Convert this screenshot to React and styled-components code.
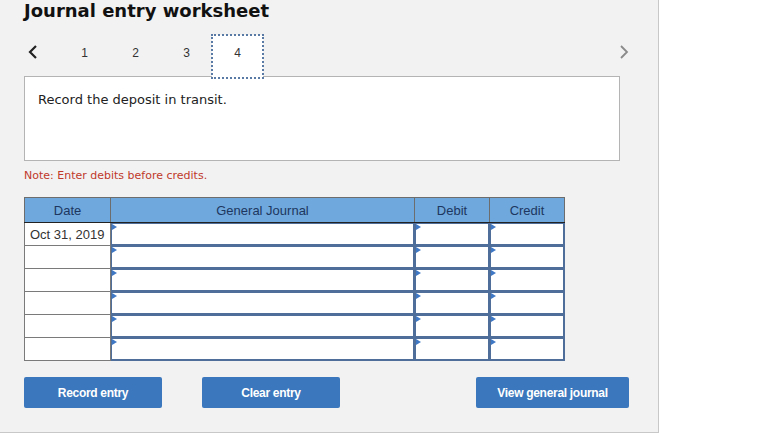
import React from 'react'
import styled, { createGlobalStyle } from 'styled-components'

const GlobalStyle = createGlobalStyle`
    html, body{
        margin: 0;
        padding: 0;
        background: #ffffff;
    }
    *{
        box-sizing: border-box;
    }
`

const Panel = styled.div`
    width: 659px;
    height: 433px;
    background-color: #f2f2f2;
    border-right: 1px solid #c8c8c8;
    border-bottom: 1px solid #c8c8c8;
    padding: 0 0 0 24px;
    font-family: "DejaVu Sans", Verdana, sans-serif;
`

const Title = styled.h1`
    margin: 0;
    padding-top: 0;
    font-size: 18px;
    line-height: 21px;
    font-weight: 700;
    color: #111;
`

const TabRow = styled.div`
    display: flex;
    align-items: stretch;
    height: 43px;
    margin-top: 14px;
    margin-bottom: -2px;
    width: 605px;
    position: relative;
    z-index: 1;
`

const Chevron = styled.button`
    display: flex;
    align-items: center;
    justify-content: ${p => (p.$next ? 'flex-end' : 'flex-start')};
    width: 35px;
    padding: 0 0 9px 3px;
    margin-left: ${p => (p.$next ? 'auto' : '0')};
    border: none;
    background: transparent;
    svg{
        display: block;
    }
`

const Tab = styled.div`
    width: 51px;
    display: flex;
    align-items: center;
    justify-content: center;
    padding-bottom: 7px;
    font-family: "Liberation Sans", Arial, sans-serif;
    font-size: 12px;
    color: #333;
    background-color: ${p => (p.$active ? '#ffffff' : 'transparent')};
    outline: ${p => (p.$active ? '2px dotted #5a7aa6' : 'none')};
    outline-offset: -1px;
`

const Prompt = styled.div`
    width: 596px;
    height: 85px;
    background-color: #ffffff;
    border: 1px solid #b4b4b4;
    padding: 15px 13px;
    font-size: 13px;
    line-height: 16px;
    color: #222;
`

const Note = styled.p`
    margin: 8px 0 0;
    font-size: 11px;
    line-height: 14px;
    color: #c0392b;
`

const Table = styled.table`
    margin-top: 14px;
    border-collapse: collapse;
    width: 540px;
    table-layout: fixed;
    font-family: "Liberation Sans", Arial, sans-serif;
    font-size: 13px;
    th{
        height: 25px;
        background-color: #6fa8dc;
        color: #1d3760;
        font-weight: 400;
        border: 1px solid #6d6d6d;
        border-left-color: #222;
        border-bottom: 1px solid #222;
        padding: 0;
    }
    th:first-child{
        border-left-color: #6d6d6d;
    }
`

const DateCell = styled.td`
    height: 23px;
    padding: 0 0 0 5px;
    background-color: #ffffff;
    border: 1px solid #7a7a7a;
    color: #333;
    white-space: nowrap;
`

const InputCell = styled.td`
    height: 23px;
    padding: 0;
    border: 1px solid #4f6e99;
    position: relative;
    &::before{
        content: '';
        position: absolute;
        top: 1px;
        left: 1px;
        border-top: 3.5px solid transparent;
        border-bottom: 3.5px solid transparent;
        border-left: 5px solid #3f78c4;
    }
`

const Field = styled.div`
    height: 22px;
    background-color: #ffffff;
    border: 1px solid #4f6e99;
`

const ButtonRow = styled.div`
    display: flex;
    margin-top: 16px;
    padding-right: 29px;
`

const Button = styled.button`
    height: 31px;
    width: ${p => p.$w}px;
    margin-left: ${p => p.$ml || '0'};
    background-color: #3b77bc;
    color: #ffffff;
    border: none;
    border-radius: 2px;
    font-family: "Liberation Sans", Arial, sans-serif;
    font-weight: 700;
    font-size: 12px;
    letter-spacing: -0.3px;
`

const rows = ['Oct 31, 2019', '', '', '', '', '']

function App() {
  return (
    <>
      <GlobalStyle />
      <Panel>
        <Title>Journal entry worksheet</Title>
        <TabRow>
          <Chevron aria-label="previous">
            <svg width="11" height="16" viewBox="0 0 11 16">
              <polyline points="9,2 3,8 9,14" fill="none" stroke="#222" strokeWidth="2.2" />
            </svg>
          </Chevron>
          {[1, 2, 3, 4].map(n => (
            <Tab key={n} $active={n === 4}>{n}</Tab>
          ))}
          <Chevron $next aria-label="next">
            <svg width="10" height="16" viewBox="0 0 10 16">
              <polyline points="2,2 8,8 2,14" fill="none" stroke="#8a8a8a" strokeWidth="1.8" />
            </svg>
          </Chevron>
        </TabRow>
        <Prompt>Record the deposit in transit.</Prompt>
        <Note>Note: Enter debits before credits.</Note>
        <Table>
          <colgroup>
            <col style={{ width: 86 }} />
            <col style={{ width: 304 }} />
            <col style={{ width: 75 }} />
            <col style={{ width: 75 }} />
          </colgroup>
          <thead>
            <tr>
              <th>Date</th>
              <th>General Journal</th>
              <th>Debit</th>
              <th>Credit</th>
            </tr>
          </thead>
          <tbody>
            {rows.map((d, i) => (
              <tr key={i}>
                <DateCell>{d}</DateCell>
                <InputCell><Field /></InputCell>
                <InputCell><Field /></InputCell>
                <InputCell><Field /></InputCell>
              </tr>
            ))}
          </tbody>
        </Table>
        <ButtonRow>
          <Button $w={138}>Record entry</Button>
          <Button $w={138} $ml="40px">Clear entry</Button>
          <Button $w={153} $ml="auto">View general journal</Button>
        </ButtonRow>
      </Panel>
    </>
  )
}

export default App
